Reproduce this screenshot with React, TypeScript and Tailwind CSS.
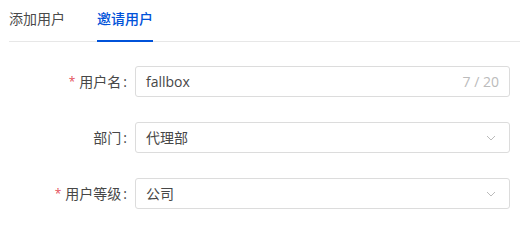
import { useState } from "react";

const FONT = "font-['Open_Sans','Noto_Sans_CJK_SC',sans-serif]";

function Chevron() {
  return (
    <svg width="10" height="6" viewBox="0 0 10 6" fill="none" className="shrink-0">
      <path d="M1 1l4 4 4-4" stroke="#bbbbbb" strokeWidth="1" />
    </svg>
  );
}

function FormRow({ label, required, children }: { label: string; required?: boolean; children: React.ReactNode }) {
  return (
    <div className="flex items-center h-[31px]">
      <div className="w-[135px] pr-[8px] flex items-center justify-end text-[14px] text-[#474747]">
        {required && <span className="text-[#e34d59] mr-[4px] text-[12px] leading-none">*</span>}
        <span>{label}</span>
        <span className="ml-[2px]">:</span>
      </div>
      <div className="flex-1 mr-[10px] h-full border border-[#dcdcdc] rounded-[3px] bg-white flex items-center pl-[10px] pr-[10px] text-[14px] text-[#474747]">
        {children}
      </div>
    </div>
  );
}

export default function App() {
  const [tab, setTab] = useState(1);
  const tabs = ["添加用户", "邀请用户"];

  return (
    <div className={`w-[520px] h-[220px] bg-white ${FONT}`}>
      <div className="ml-[9px] flex gap-[32px] h-[42px] border-b border-[#e7e7e7]">
        {tabs.map((t, i) => (
          <button
            key={t}
            onClick={() => setTab(i)}
            className={`relative h-full text-[14px] flex items-center pb-[5px] ${
              tab === i ? "text-[#0052d9] font-medium" : "text-[#4a4a4a]"
            }`}
          >
            {t}
            {tab === i && <span className="absolute left-0 right-0 bottom-[-1px] h-[2px] bg-[#0052d9]" />}
          </button>
        ))}
      </div>

      <div className="mt-[24px] flex flex-col gap-[25px]">
        <FormRow label="用户名" required>
          <span className="flex-1">fallbox</span>
          <span className="text-[#bbbbbb]">7 / 20</span>
        </FormRow>
        <FormRow label="部门">
          <span className="flex-1">代理部</span>
          <span className="mr-[3px]"><Chevron /></span>
        </FormRow>
        <FormRow label="用户等级" required>
          <span className="flex-1">公司</span>
          <span className="mr-[3px]"><Chevron /></span>
        </FormRow>
      </div>
    </div>
  );
}
